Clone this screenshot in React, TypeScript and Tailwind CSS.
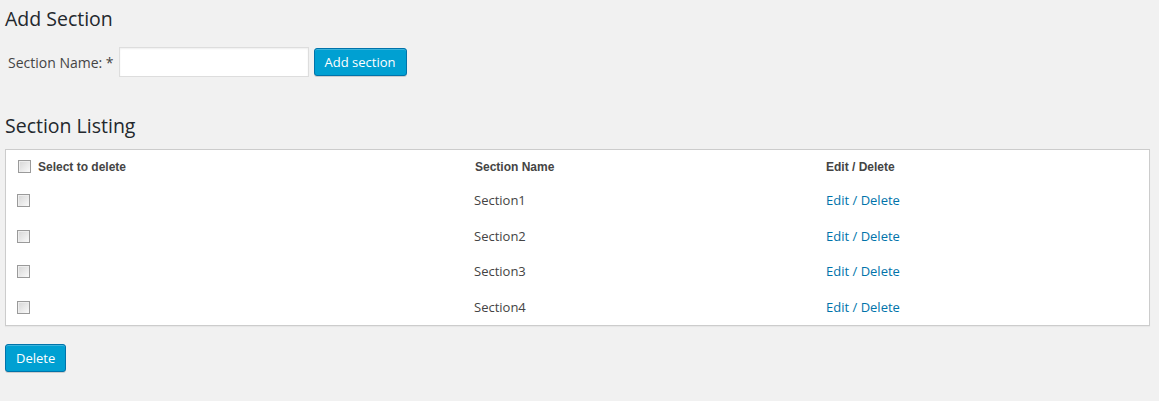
import React from "react";

const sections = ["Section1", "Section2", "Section3", "Section4"];

function Checkbox() {
  return (
    <span className="inline-block h-[13px] w-[13px] border border-[#9a9a9a] bg-gradient-to-br from-[#d6d6d6] to-[#fafafa] shadow-[inset_1px_1px_0_#eee]" />
  );
}

function WpButton({ children }: { children: React.ReactNode }) {
  return (
    <button
      type="button"
      className="h-[28px] rounded-[3px] border border-[#0073aa] bg-[#00a0d2] px-[10px] text-[13px] leading-[26px] text-white shadow-[inset_0_1px_0_rgba(120,200,230,0.5),0_1px_0_rgba(0,0,0,0.15)]"
    >
      {children}
    </button>
  );
}

export default function App() {
  return (
    <div
      className="min-h-[401px] bg-[#f1f1f1] pl-[5px] pr-[9px] pt-[4px] text-[13px] text-[#444]"
      style={{ fontFamily: '"Open Sans", sans-serif' }}
    >
      {/* Add form */}
      <h2 className="text-[19.5px] font-normal leading-[29px] text-[#23282d]">Add Section</h2>
      <div className="mt-[14px] flex items-center">
        <label className="ml-[3px] mr-[5px] text-[14px]">Section Name: *</label>
        <input
          type="text"
          className="h-[30px] w-[190px] border border-[#ddd] bg-white shadow-[inset_0_1px_2px_rgba(0,0,0,0.07)] outline-none"
        />
        <div className="ml-[5px]">
          <WpButton>Add section</WpButton>
        </div>
      </div>

      {/* Listing */}
      <h2 className="mt-[34px] text-[19.5px] font-normal leading-[29px] text-[#23282d]">Section Listing</h2>
      <div className="mt-[9px] border border-[#ccc] bg-white shadow-[0_1px_1px_rgba(0,0,0,0.04)]">
        <div
          className="grid h-[33px] grid-cols-[457px_337px_1fr] items-center text-[12px] font-bold text-[#444]"
          style={{ fontFamily: '"Liberation Sans", Arial, sans-serif' }}
        >
          <div className="flex items-center gap-[7px] pl-[12px]">
            <Checkbox />
            <span>Select to delete</span>
          </div>
          <div className="pl-[12px]">Section Name</div>
          <div className="pl-[26px]">Edit / Delete</div>
        </div>
        {sections.map((name) => (
          <div key={name} className="grid h-[35.5px] grid-cols-[457px_337px_1fr] items-center">
            <div className="flex items-center pl-[11px]">
              <Checkbox />
            </div>
            <div className="pl-[11px]">{name}</div>
            <div className="pl-[26px]">
              <a className="text-[#0073aa]">Edit</a>
              <span className="text-[#0073aa]"> / </span>
              <a className="text-[#0073aa]">Delete</a>
            </div>
          </div>
        ))}
      </div>

      <div className="mt-[18px]">
        <WpButton>Delete</WpButton>
      </div>
    </div>
  );
}
